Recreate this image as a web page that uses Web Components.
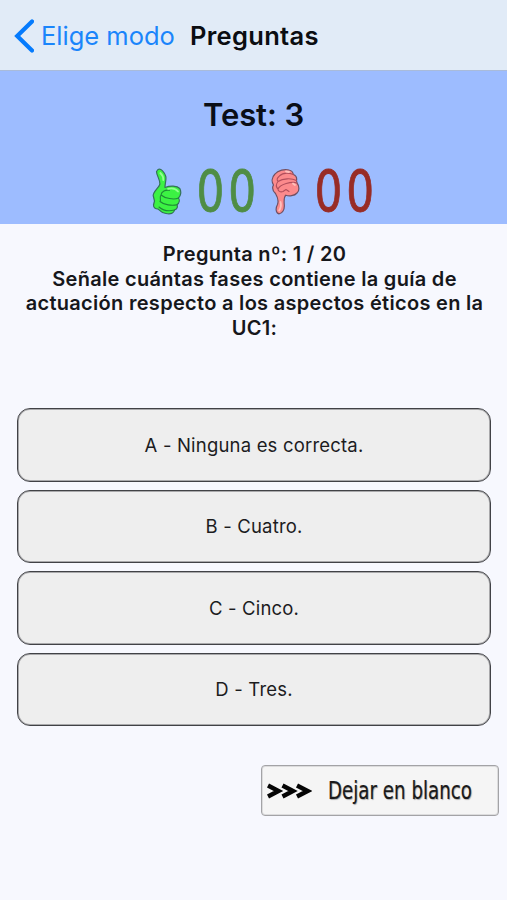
<!DOCTYPE html>
<html lang="es">
<head>
<meta charset="utf-8">
<title>Preguntas</title>
<style>
    html, body {
        margin: 0;
        height: 100%;
    }

    body {
        background: #f7f8fe;
        font-family: Inter, "Liberation Sans", sans-serif;
        color: #16171b;
    }
</style>
</head>
<body>
<quiz-page></quiz-page>

<script>
class NavBar extends HTMLElement {
    connectedCallback() {
        this.attachShadow({ mode: 'open' });
        this.shadowRoot.innerHTML = `
            <style>
                :host {
                    display: flex;
                    align-items: center;
                    box-sizing: border-box;
                    height: 71px;
                    padding: 2px 0 0 14px;
                    background: #e1ebf7;
                    border-bottom: 1px solid #a9bbda;
                    font-size: 25.5px;
                    line-height: 32px;
                    white-space: nowrap;
                }

                a {
                    display: flex;
                    align-items: center;
                    gap: 7px;
                    width: 176px;
                    color: #1a85fb;
                    text-decoration: none;
                }

                h1 {
                    margin: 0;
                    font-size: 25.5px;
                    font-weight: 600;
                    letter-spacing: .3px;
                    color: #0b0d11;
                }
            </style>

            <a>
                <svg width="20" height="34" viewBox="0 0 20 34" fill="none">
                    <path d="M18 2.5 3.2 17 18 31.5" stroke="#057bfd" stroke-width="4.2" stroke-linecap="round" stroke-linejoin="miter"/>
                </svg>
                <slot name="back"></slot>
            </a>
            <h1><slot></slot></h1>
        `;
    }
}

class ThumbIcon extends HTMLElement {
    connectedCallback() {
        const up = `
            <svg width="30" height="48" viewBox="0 0 30 48" stroke-linejoin="round" stroke-linecap="round">
                <path d="M6 1.5C9 .2 12.500 4 13.800 8.500C14.500 12 12.800 16 13 19.500C18 17.500 25 17.500 27.800 20.500C29.500 23.500 28.800 28 26.500 30C27.800 32 27.500 35 25 36.800C26 39 24.800 41.300 22.500 42C22 45.500 18.500 46.300 14 45.500C9.500 45 7.500 42.500 6 41C3.500 41 1.500 40 1.500 37L2.500 33L1.200 27.500C1.200 23.500 6.500 20 7.800 16.500C8.500 12 4.500 7.500 4.500 3.500Z" fill="#3cf243" stroke="#35715a" stroke-width="1.200"/>
                <path d="M9 27C9.500 23.500 13.500 21.500 17.500 22.300M9 27C13 30.500 22 32 26.500 30M8 33.500C12 37 20 38 25 36.800M7 39C11 42.500 17.500 43.300 22.500 42M9 27C7 30 9.500 31.500 8 33.500" fill="none" stroke="#1d8a35" stroke-width="1.100"/>
                <path d="M8.300 5C10.500 7 11.500 9 11.300 12M16 20.800C20 19.800 24 20.800 26 23.500" fill="none" stroke="#93ff90" stroke-width="1.800"/>
            </svg>`;
        const down = `
            <svg width="30" height="48" viewBox="0 0 30 48" stroke-linejoin="round" stroke-linecap="round">
                <path d="M4 6C7 2 14 .8 18 2C20.500 2.500 22 4 22.300 6.500C25 7.500 26 10 25.500 12.500L26 15C28.500 18 28.500 23 26 25C23.500 28 18 28.500 14.800 27.200C12.500 29.500 13 33.500 13.300 37C13.600 41.500 11.500 45.500 8 45.800C4.500 45.300 4.500 40 6.500 36.500C8 32.500 6 28 4.500 25.500C2 23 1 19.500 2.500 17C.5 14 .5 9.500 4 6Z" fill="#fb8a8c" stroke="#6f5064" stroke-width="1.200"/>
                <path d="M22.300 6.500C17 4.500 11.500 5 8.200 8.200C6 10 5.500 12 7 13.500C12 10.500 20 9.800 25.500 12.500M7 13.500C5 16 5 19 7 21C9 16.500 20.500 13 26 15M7 21C7 23 9 24.500 12 23.500L15 21.500L18 23.500" fill="none" stroke="#b14e5c" stroke-width="1.100"/>
                <path d="M9.500 34C10.500 37 9.800 40 8.200 42.500M15 3.500L18 4M22 15.500L24 17" fill="none" stroke="#ffc0bb" stroke-width="1.800"/>
            </svg>`;

        this.attachShadow({ mode: 'open' });
        this.shadowRoot.innerHTML = `
            <style>
                :host {
                    display: block;
                    width: 30px;
                    height: 48px;
                }

                svg {
                    display: block;
                }

                :host([type="down"]) svg {
                    margin-left: 1px;
                }
            </style>
            ${this.getAttribute('type') === 'down' ? down : up}
        `;
    }
}

class ScoreCount extends HTMLElement {
    connectedCallback() {
        this.attachShadow({ mode: 'open' });
        this.shadowRoot.innerHTML = `
            <style>
                :host {
                    display: flex;
                    justify-content: center;
                    width: 64px;
                    height: 48px;
                    font-family: "DejaVu Sans", sans-serif;
                    font-size: 57px;
                    line-height: 49px;
                }

                span {
                    display: block;
                    letter-spacing: 5px;
                    margin-right: -5px;
                    transform: scaleX(.77);
                    -webkit-text-stroke: .9px currentColor;
                }
            </style>

            <span><slot></slot></span>
        `;
    }
}

class TestBanner extends HTMLElement {
    connectedCallback() {
        this.attachShadow({ mode: 'open' });
        this.shadowRoot.innerHTML = `
            <style>
                :host {
                    display: flex;
                    flex-direction: column;
                    align-items: center;
                    box-sizing: border-box;
                    height: 153px;
                    padding-top: 24px;
                    background: #9dbcff;
                }

                h2 {
                    margin: 0;
                    font-size: 31px;
                    line-height: 40px;
                    font-weight: 600;
                    letter-spacing: -.1px;
                    color: #0a0e17;
                }

                .score {
                    display: grid;
                    grid-template-columns: 30px 64px 30px 64px;
                    column-gap: 12px;
                    margin: 33px 0 0 20px;
                }

                .right {
                    color: #4f8d45;
                }

                .wrong {
                    color: #982c26;
                }
            </style>

            <h2><slot></slot></h2>
            <div class="score">
                <thumb-icon type="up"></thumb-icon>
                <score-count class="right">${this.getAttribute('right')}</score-count>
                <thumb-icon type="down"></thumb-icon>
                <score-count class="wrong">${this.getAttribute('wrong')}</score-count>
            </div>
        `;
    }
}

class QuestionText extends HTMLElement {
    connectedCallback() {
        this.attachShadow({ mode: 'open' });
        this.shadowRoot.innerHTML = `
            <style>
                :host {
                    display: block;
                    box-sizing: border-box;
                    height: 184px;
                    padding: 18px 15px 0 17px;
                    text-align: center;
                    font-size: 20px;
                    line-height: 24.5px;
                    font-weight: 600;
                    letter-spacing: .3px;
                }

                div {
                    white-space: nowrap;
                }
            </style>

            <div><slot name="number"></slot></div>
            <slot></slot>
        `;
    }
}

class AnswerOption extends HTMLElement {
    connectedCallback() {
        this.attachShadow({ mode: 'open' });
        this.shadowRoot.innerHTML = `
            <style>
                :host {
                    display: block;
                }

                button {
                    display: block;
                    box-sizing: border-box;
                    width: 100%;
                    height: 73.5px;
                    padding: 0;
                    border: 1px solid #414246;
                    border-radius: 13px;
                    box-shadow: inset 0 0 0 1px rgba(65, 66, 70, .4);
                    background: #eeeeee;
                    font: 400 18.5px/24px Inter, "Liberation Sans", sans-serif;
                    letter-spacing: .19px;
                    color: #1c1c1e;
                }
            </style>

            <button><slot></slot></button>
        `;
    }
}

class SkipButton extends HTMLElement {
    connectedCallback() {
        this.attachShadow({ mode: 'open' });
        this.shadowRoot.innerHTML = `
            <style>
                :host {
                    display: block;
                }

                button {
                    display: flex;
                    align-items: center;
                    box-sizing: border-box;
                    width: 238px;
                    height: 51px;
                    padding: 1px 0 0 5px;
                    border: 1px solid #a3a3a6;
                    border-radius: 4px;
                    box-shadow: inset 0 0 0 1px rgba(163, 163, 166, .3);
                    background: #f5f5f5;
                    color: #1a1a1a;
                    white-space: nowrap;
                    font: 400 24px/30px "DejaVu Sans", sans-serif;
                }

                svg {
                    flex: none;
                    margin-right: 16px;
                }

                span {
                    transform: scaleX(.76);
                    transform-origin: left;
                    text-shadow: 1px 1px 1px #aaa;
                    -webkit-text-stroke: .2px #1a1a1a;
                }
            </style>

            <button>
                <svg width="45" height="18" viewBox="0 0 45 18" fill="none" stroke="#050505" stroke-width="4.4">
                    <path d="M1 3.500 11.500 9 1 14.500M15.500 3.500 26 9 15.500 14.500M30 3.500 40.500 9 30 14.500"/>
                </svg>
                <span><slot></slot></span>
            </button>
        `;
    }
}

class QuizPage extends HTMLElement {
    connectedCallback() {
        this.attachShadow({ mode: 'open' });
        this.shadowRoot.innerHTML = `
            <style>
                :host {
                    display: block;
                    min-height: 100%;
                }

                .answers {
                    display: grid;
                    gap: 8px;
                    padding: 0 16px 0 17px;
                }

                .footer {
                    display: flex;
                    justify-content: flex-end;
                    padding: 39px 8px 0;
                }
            </style>

            <nav-bar><span slot="back">Elige modo</span>Preguntas</nav-bar>
            <test-banner right="00" wrong="00">Test: 3</test-banner>
            <question-text>
                <span slot="number">Pregunta nº: 1 / 20</span>
                Señale cuántas fases contiene la guía de actuación respecto a los aspectos éticos en la UC1:
            </question-text>
            <div class="answers">
                <answer-option>A - Ninguna es correcta.</answer-option>
                <answer-option>B - Cuatro.</answer-option>
                <answer-option>C - Cinco.</answer-option>
                <answer-option>D - Tres.</answer-option>
            </div>
            <div class="footer">
                <skip-button>Dejar en blanco</skip-button>
            </div>
        `;
    }
}

customElements.define('nav-bar', NavBar);
customElements.define('thumb-icon', ThumbIcon);
customElements.define('score-count', ScoreCount);
customElements.define('test-banner', TestBanner);
customElements.define('question-text', QuestionText);
customElements.define('answer-option', AnswerOption);
customElements.define('skip-button', SkipButton);
customElements.define('quiz-page', QuizPage);
</script>
</body>
</html>
